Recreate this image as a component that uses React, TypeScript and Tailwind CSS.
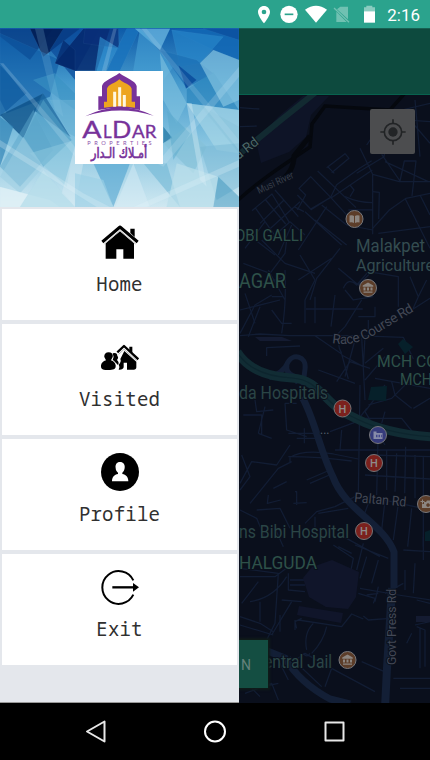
import React from "react";

const sans = "font-[Roboto,'Liberation_Sans',sans-serif]";

function StatusBar() {
  return (
    <header className={`h-7 shrink-0 bg-[#2ba38d] flex justify-end ${sans}`}>
      <svg viewBox="0 0 600 84" className="w-[200px] h-7 text-white" fill="#fff">
        <path fillRule="evenodd" d="M102 18c-10 0-18 8-18 18 0 13 18 34 18 34s18-21 18-34c0-10-8-18-18-18zm0 11a7 7 0 1 1 0 14 7 7 0 0 1 0-14z" />
        <circle cx="177" cy="43" r="26" />
        <path d="M164 43h26" stroke="#2ba38d" strokeWidth="5" />
        <path d="M225 29q33-24 66 0l-33 39z" />
        <path d="M331 20h23v38l-33-30zM319 35l31 31h-31z" opacity=".33" />
        <path d="M312 24l45 43" stroke="#72c0b2" strokeWidth="4" />
        <path d="M402 22h7v-5h18v5h8v13h-33z" opacity=".45" />
        <path d="M402 34h33v34h-33z" />
        <text x="472" y="63" fontSize="50" textLength="98" lengthAdjust="spacingAndGlyphs" fontFamily="Roboto, sans-serif">2:16</text>
      </svg>
    </header>
  );
}

const shards: [string, string, number][] = [
  ["0,86 160,86 90,180 0,110", "#0a3f86", 0.75],
  ["90,86 240,86 130,170", "#021d55", 0.9],
  ["0,100 180,180 150,290 20,340 0,300", "#0d5aa5", 0.6],
  ["150,150 190,86 300,86 230,212 225,240", "#0b4a9a", 0.7],
  ["165,190 250,86 330,86 290,212 225,212", "#04256a", 0.8],
  ["255,86 355,86 357,145 250,130", "#0a2f7a", 0.7],
  ["190,120 225,150 225,212 165,190", "#03276b", 0.7],
  ["300,110 357,145 310,212 285,212", "#2f8fd0", 0.65],
  ["380,86 420,86 360,212 320,212", "#1973bd", 0.8],
  ["405,86 510,86 480,150", "#72bfe6", 0.7],
  ["420,86 520,200 490,240 470,212 400,212", "#4aa5d8", 0.55],
  ["515,90 717,86 717,180 640,150", "#1268b5", 0.85],
  ["610,86 717,86 717,120", "#0b4f9f", 0.8],
  ["515,90 670,110 600,190 540,200", "#2685c9", 0.7],
  ["480,150 560,265 640,220 590,180", "#1b6fb4", 0.7],
  ["535,195 590,240 558,266", "#08499a", 0.8],
  ["560,268 640,215 717,330 560,310", "#2581bb", 0.6],
  ["640,150 717,180 717,300 670,320 600,190", "#8ac8e3", 0.65],
  ["480,160 560,310 530,370 490,300", "#82c4e1", 0.6],
  ["0,195 80,280 0,350", "#0e5a9f", 0.7],
  ["0,345 130,280 70,415", "#0a4e86", 0.75],
  ["130,280 212,412 100,330", "#145f98", 0.65],
  ["100,240 165,220 225,280 225,330", "#3a93c4", 0.6],
  ["150,300 225,300 225,410 205,400", "#69b1d4", 0.6],
  ["0,350 40,380 0,500", "#2c80b4", 0.65],
  ["70,415 130,300 215,420 130,500", "#4f9fc6", 0.6],
  ["0,500 100,330 160,450 60,560", "#5ba6cb", 0.5],
  ["90,460 225,420 200,560", "#8cc8df", 0.55],
  ["0,530 70,410 130,500 60,580", "#9acde2", 0.5],
  ["0,560 150,600 180,621 0,621", "#e2f2f7", 0.8],
  ["60,621 130,510 225,621", "#b7deeb", 0.75],
  ["185,580 225,440 250,490 225,621", "#d4eaf3", 0.5],
  ["280,490 390,490 340,621", "#3a98cb", 0.5],
  ["225,520 310,540 340,621 225,621", "#9bd0e6", 0.65],
  ["345,621 400,490 450,621", "#d8edf6", 0.5],
  ["430,490 500,490 540,621", "#71b8d6", 0.6],
  ["490,380 518,415 490,430", "#297da9", 0.8],
  ["490,430 560,380 620,440 580,520", "#86c2d9", 0.7],
  ["500,330 570,400 520,480", "#5aaacd", 0.5],
  ["560,310 717,330 717,460 650,450", "#a9d8e8", 0.65],
  ["600,315 717,380 717,460", "#8ac4dc", 0.5],
  ["600,440 717,430 717,560 650,600", "#76b7d4", 0.45],
  ["530,490 655,530 640,621 500,621", "#badfeb", 0.75],
  ["655,530 717,590 717,621 640,621", "#3f96be", 0.5],
  ["560,310 575,310 620,560 600,540", "#d8eef6", 0.4],
  ["105,86 130,86 190,350 165,330", "#8fc9e7", 0.2],
  ["340,86 350,86 250,490 230,490", "#d8effa", 0.2],
  ["425,86 440,86 717,420 717,450", "#d8effa", 0.15],
  ["0,190 10,190 225,440 225,470", "#d8effa", 0.2],
  ["717,200 717,230 490,500 470,490", "#d8effa", 0.2],
  ["717,480 717,500 440,621 400,621", "#e8f6fb", 0.25],
  ["0,440 0,420 250,580 330,621 290,621", "#e8f6fb", 0.25],
];

function BrandPanel() {
  return (
    <div className="h-[179px] relative shrink-0">
      <svg viewBox="0 84 717 537" preserveAspectRatio="none" className="w-full h-full block">
        <defs>
          <linearGradient id="sky" x1="0" y1="0" x2="0" y2="1">
            <stop offset="0" stopColor="#0d5aa8" />
            <stop offset=".3" stopColor="#4398cc" />
            <stop offset=".62" stopColor="#83c2df" />
            <stop offset="1" stopColor="#cfe8f1" />
          </linearGradient>
        </defs>
        <rect y="84" width="717" height="537" fill="url(#sky)" />
        {shards.map(([p, c, o], i) => (
          <polygon key={i} points={p} fill={c} opacity={o} stroke="#a5d5ee" strokeOpacity=".15" strokeWidth="1.5" />
        ))}
      </svg>
      <svg viewBox="0 0 264 279" className="absolute left-[75px] top-[43px] w-[88px] h-[93px] bg-white" role="img">
        <path d="M70 117V76h11V45C86 28 111 23 133 6c22 17 47 22 52 39v31h10v41q-62-12-125 0z" fill="#77329a" />
        <path d="M87 110V92h9V53c5-14 22-15 37-28 15 13 32 14 37 28v39h10v18q-46-9-93 0z" fill="#eda51f" />
        <path d="M119 107V62M134 106V49M148 107V72" stroke="#fff7df" strokeWidth="9" />
        <path d="M30 136q103-52 206-2-103-32-206 2z" fill="#77329a" />
        <g fill="#77329a" fontFamily="Lato, sans-serif">
          <g stroke="#77329a" strokeWidth="1">
            <text x="22" y="201" fontSize="71" textLength="58" lengthAdjust="spacingAndGlyphs">A</text>
            <text x="84" y="201" fontSize="50" textLength="26" lengthAdjust="spacingAndGlyphs">L</text>
            <text x="111" y="201" fontSize="71" textLength="58" lengthAdjust="spacingAndGlyphs">D</text>
            <text x="171" y="201" fontSize="50" textLength="73" lengthAdjust="spacingAndGlyphs">AR</text>
          </g>
          <text x="37" y="223" fontSize="17" textLength="193" opacity=".85">PROPERTIES</text>
          <text x="132" y="262" fontSize="43" textAnchor="middle" direction="rtl" textLength="168" lengthAdjust="spacingAndGlyphs" fontFamily="DejaVu Sans, sans-serif" stroke="#77329a" strokeWidth="2">أمـلاك الـدار</text>
        </g>
      </svg>
    </div>
  );
}

function HomeIcon() {
  return (
    <svg viewBox="0 0 114 102" className="w-[38px] h-[34px]">
      <path d="M88 11h13v25L88 24z" />
      <path d="M4 51L57 6l53 45" fill="none" stroke="#000" strokeWidth="9" strokeLinejoin="round" />
      <path d="M14 55l43-36 42 36v46H67V73H46v28H14z" />
      <path d="M10 57L57 17l47 40" fill="none" stroke="#bbb" strokeWidth="3" />
    </svg>
  );
}

function VisitedIcon() {
  return (
    <svg viewBox="0 0 114 78" className="w-[38px] h-[26px]">
      <path d="M85 8h9v20l-9-8zM53 62q9-9 5-17l12-24 36 32v17q0 7-8 7H78V56H68v14q-2 8-15 7 5-8 0-15z" />
      <path d="M49 25L69 6l43 40" fill="none" stroke="#000" strokeWidth="7" strokeLinejoin="round" />
      <path d="M53 31l16-15 38 34" fill="none" stroke="#aaa" strokeWidth="2.5" />
      <path d="M35 28q14-4 14 8 5 4-1 12 8 7 3 15l-9-9q-3-4-7-6 5-10 0-20z" />
      <path d="M23 25c10 0 14 7 12 14l-5 10q12 4 14 15c1 12-6 14-22 14S-1 76 0 64q2-11 15-15l-5-10c-1-7 3-14 13-14z" />
    </svg>
  );
}

function ProfileIcon() {
  return (
    <svg viewBox="0 0 114 114" className="w-[38px] h-[38px]">
      <circle cx="57" cy="57" r="57" />
      <path d="M57 27c-10 0-15 8-13 18 0 7 3 11 7 14v4c-11 2-18 9-18 22h49c0-13-7-20-18-22v-4c4-3 6-7 7-14 2-10-4-18-14-18z" fill="#fff" />
    </svg>
  );
}

function ExitIcon() {
  return (
    <svg viewBox="0 0 114 105" className="w-[38px] h-[35px]">
      <path d="M97 31A49 49 0 1 0 97 74" fill="none" stroke="#000" strokeWidth="6" />
      <path d="M34 52h66" stroke="#000" strokeWidth="7" />
      <path d="M96 39l18 13-18 13z" />
    </svg>
  );
}

const menu = [
  { label: "Home", icon: <HomeIcon /> },
  { label: "Visited", icon: <VisitedIcon /> },
  { label: "Profile", icon: <ProfileIcon /> },
  { label: "Exit", icon: <ExitIcon /> },
];

function Drawer() {
  return (
    <aside className="w-[239px] shrink-0 bg-[#e4e7ec] flex flex-col border-b border-[#999]">
      <BrandPanel />
      <nav className="flex flex-col gap-1 pt-0.5 px-0.5">
        {menu.map((m) => (
          <button key={m.label} className="h-[111px] bg-white flex flex-col items-center pt-3.5">
            <span className="h-[38px] flex items-center">{m.icon}</span>
            <span className="mt-[9px] leading-7 text-[19px] tracking-[0.2px] text-[#303030] font-['Noto_Sans_Mono','DejaVu_Sans_Mono',monospace]">
              {m.label}
            </span>
          </button>
        ))}
      </nav>
    </aside>
  );
}

const zoneNorth = [
  "M15 38l58 4M15 95l50-2M51 347l60-50 52 85M62 340l60 85M92 315l60 72M120 285l70 80M165 380l45 40M75 385l72-70M95 410l100-90M110 430l55-50",
  "M187 345l25-45-20-20 35-35 60 62 50 55M187 300l40 42 60-35 18-38 70-50 35-22M248 228l115 110M278 215l20 20M275 218l55-42 12 14-52 43M287 310l125-85M227 345l60-38M207 350l-30-15",
  "M375 160l38 78v180M365 235l82-50 15-90M413 238l80 22h92M440 178l55 80 13-60h35l-12 105M450 200l130 60M345 270l12 15-12 20M330 305q40 18 82 18M340 345l72-1M395 150l55-80 135 10M450 95l75-20 60 70M540 15l15 170M500 45l85-20",
  "M413 290l20 2-2 80M413 400l50-55 50-35 72-15M510 310l75 150M555 300l30 60M430 415l155-20M260 330l75 60 78 15M240 375l95 75M210 350l110 100M190 465l85-130M15 400l105 80M30 460l60-80M130 480l40-90",
];

const zoneMiddle = [
  "M25 70l80 30 45-60 5-40M80 0l70 70 90 30M150 90q5 100-10 190M100 90l50 90M30 160l30 90M15 210l120-30M60 140l90-30M210 180v70M240 170v80M213 207h170M195 45l45 75-30 60",
  "M190 120l100-65M315 25l-70 90-20 65M325 145q15-35 40-10l35-40 90 15v90M330 150l25 30 60-10M310 85l60 50 70-70M380 180l-50 80-30 30M300 165l-12 95M370 230h50v-30M400 240v45M470 90l115-25M525 110l25 60-20 45M575 120l-25 50M530 210l55-35",
  "M15 287l60-5 90 5h200l140 5 30 65M95 348v-25l100-5M240 287l80 55 20 75M320 340q-18-30 0-50M320 345l65 35 5-90M360 300l-30 110M250 390l110 40M305 425l40-60 60 20M380 290l10 190M390 370l55-45M420 415l165 30M450 350l-60 70",
  "M15 280l45-85 50-30M40 290l35-90M110 210l30 40h30M110 170h35",
];

const zoneSouth = [
  "M25 105h55v60M90 80l-20 80M60 60l5 35 50-5M70 160l40 15M150 70l5 80 60 20M160 160h85M185 175h60M208 145v45M150 70h35",
  "M15 310l35-65 75 10 40-60M20 225l25 65-30 40M45 370l85-105 40-20M100 345l-3 25 40-10M115 325l40-20M160 230q90 0 190 13M165 232q40-25 130-10l75 15M165 230v20M215 300l70-30M225 310l65-28M180 335h5v40M175 370l40-2",
  "M15 390l50 25 25 60M65 390l70-5 30 60M120 445l25 55M210 430l35-35 55-15 60-30M240 410v40M250 400l90-15M285 155l80-30 30-40M320 150l-5 60M375 15l-5 325M450 15l-60 80 60 100",
  "M300 210h285M405 225l180 5M390 285l195 12M430 135l-5 210M455 210v120M485 220l-5 115M512 200l-3 140M540 225v130M565 230v120M400 350l185 40M410 345l-25 65M450 360l-10 90M490 370l-15 110M530 385l-12 115M565 395v105",
  "M400 75l70-20 55-55M440 130l10-35M535 85l50-30M530 85l-50-40-10-40M380 115h120l40 50",
];

const zoneBottom = [
  "M15 140h105l60-45M15 115l115 15-10 150-25 50M20 220l50-65M45 215q70-10 110-75M160 130v50l50 5M165 150h45M165 165h45M140 210l60 5M15 260l60 20 40 25M75 215v60M135 255v50M185 295l-5-20 20-10M190 270l130 20 30-38 35 15M385 258l15 12 65-5M180 270v30",
  "M235 280q-30 30-20 80M275 290q-10 45-45 80M205 370q10 15 20 0M160 405l50-35 70 40 140 75M165 380l95 90M270 470l20-55M295 45l60 40-10 50M310 50l40 20M325 20l110 60M360 45l100 40M395 80l-20 65M430 90l-20 70M385 40l-20 80",
  "M375 175l115 20 95 15M370 190l50 15-5 15M395 195l35-5M420 215l10-45M450 190l55-30M510 120v60M540 100l-5 90M565 20v70M505 60l80 5M545 210l40 10M540 285l45-10M545 290l25 10v110M555 295v120M530 310l-15 30M475 445h110M495 475h90M380 395l80 35",
  "M15 440l60 60M30 490l80-30 20 50M15 285l100 30M60 475l70-15M110 315l60-100M120 370l40 80",
];

function H({ x, y }: { x: number; y: number }) {
  return (
    <g>
      <circle cx={x} cy={y} r="8.5" fill="#7b211d" stroke="#777476" strokeWidth="1" />
      <text x={x} y={y + 4} fontSize="11" fontWeight="500" textAnchor="middle" fill="#8e8b8b">H</text>
    </g>
  );
}

function Pin({ x, y, kind }: { x: number; y: number; kind: "book" | "bank" | "camera" | "store" }) {
  return (
    <g transform={`translate(${x} ${y})`}>
      <circle r="8.5" fill={kind === "store" ? "#363b7c" : "#5c3d29"} stroke="#77777b" />
      {kind === "book" && <path d="M-5-3.500q3-.8 4.500.4v7q-2-1.200-4.500-.5zM5-3.500q-3-.8-4.500.4v7q2-1.200 4.500-.5z" fill="#8c8580" />}
      {kind === "bank" && <path d="M-5.300-2.500L0-5.500l5.300 3v1.200h-10.600zM-4.500-.5h2v3h-2zM-1-.5h2v3h-2zM2.500-.5h2v3h-2zM-4.500 3.400h9v1.400h-9z" fill="#8c8580" />}
      {kind === "camera" && <path fillRule="evenodd" d="M-2-2h2l1-1.500h3L5-2h3v6H-4V0h2zM2-.8a1.800 1.800 0 1 0 .1 0zM-4-4.500h1V-3h1.500v1H-3v1.500h-1V-2h-1.500v-1H-4z" fill="#8c8580" />}
      {kind === "store" && (
        <g>
          <path d="M-4.500-3.500h3v1.500h6v6h-9z" fill="#878ba9" />
          <path d="M-2-.2h1.500v2.500H-2zM.5-.2H2v2.500H.5zM3-.2h.8v2.500H3z" fill="#40458a" />
        </g>
      )}
    </g>
  );
}

function Roads({ y, paths }: { y: number; paths: string[] }) {
  return (
    <g transform={`translate(235 ${y}) scale(.33333)`} fill="none" stroke="#121d34" strokeWidth="3.800" strokeLinejoin="round">
      {paths.map((d) => (
        <path key={d} d={d} />
      ))}
    </g>
  );
}

function CityMap() {
  return (
    <svg viewBox="239 95 191 608" className="w-[191px] h-[608px] block bg-[#0a0f1c]" fontFamily="Roboto, sans-serif">
      <path d="M261 163l28-11 17-15 5-22 18-19h-26l-25 21-22 24z" fill="#0e1427" />
      <Roads y={95} paths={zoneNorth} />
      <Roads y={240} paths={zoneMiddle} />
      <Roads y={380} paths={zoneSouth} />
      <Roads y={530} paths={zoneBottom} />
      <path d="M303 578l9-11 20-7 27 12-3 25-8 12-22-2-17-10zM299 606l44 7-2 10-44-8z" fill="#10152a" />
      <path d="M255 337h27l10 4h-32zM416 616h14v6h-14z" fill="#141b31" />
      <path d="M398 344l5-5 10 8-8 7zM371 387l16-1-1 15-18-1zM425 532l5-2v11h-5z" fill="#06202a" />
      <g fill="none" stroke="#131f36">
        <path d="M269 378q15-6 18-14c5-12 20-8 18 5l-2 16M287 365q-2 8 7 11l4 7" strokeWidth="5" />
        <path d="M302 397c12 20 18 54 31 80 12 33 51 47 61 75v36" strokeWidth="7" />
        <path d="M392 588l-5 80-2 40" strokeWidth="8" />
        <path d="M260 648l25 10q15 25 45 41l20 5" strokeWidth="7" />
      </g>
      <g fill="none">
        <path d="M237 156l44-36 35-28" stroke="#122a31" strokeWidth="6" />
        <path d="M237 352q15 24 55 26c30 2 30 27 65 41q30 15 77 18" stroke="#112c34" strokeWidth="9" />
        <path d="M237 352q15 24 55 26c30 2 30 27 65 41q30 15 77 18" stroke="#0d252e" strokeWidth="1.200" />
        <path d="M237 201q20-18 45-35l28-19 2-23 13-18 65 4 15-17" stroke="#05080e" strokeWidth="3.500" />
        <path d="M279 182q15-10 15-26l16-20" stroke="#05080e" strokeWidth="5" />
      </g>
      <g stroke="#0a101c" strokeWidth="2" paintOrder="stroke" fill="#2e5149">
        <text x="238.500" y="160" fontSize="13.500" fill="#4d6866" transform="rotate(-38 238.500 160)">a Rd</text>
        <text x="259" y="194" fontSize="10" fill="#373d49" textLength="39" lengthAdjust="spacingAndGlyphs" transform="rotate(-25 259 194)">Musi River</text>
        <text x="235" y="241" fontSize="16.500" textLength="68" lengthAdjust="spacingAndGlyphs">OBI GALLI</text>
        <text x="356" y="251.500" fontSize="18" fill="#344c50" textLength="69" lengthAdjust="spacingAndGlyphs">Malakpet</text>
        <text x="356" y="271" fontSize="17" fill="#344c50" textLength="78" lengthAdjust="spacingAndGlyphs">Agriculture</text>
        <text x="239" y="288" fontSize="19.500" textLength="47" lengthAdjust="spacingAndGlyphs">AGAR</text>
        <text x="377" y="367" fontSize="16" textLength="60" lengthAdjust="spacingAndGlyphs">MCH CO</text>
        <text x="400" y="384.500" fontSize="16" textLength="32" lengthAdjust="spacingAndGlyphs">MCH</text>
        <text x="239" y="398.500" fontSize="18" fill="#2a4546" textLength="89" lengthAdjust="spacingAndGlyphs">da Hospitals</text>
        <text x="239" y="538" fontSize="18" fill="#2a4546" textLength="110" lengthAdjust="spacingAndGlyphs">ns Bibi Hospital</text>
        <text x="239" y="569" fontSize="18" textLength="78" lengthAdjust="spacingAndGlyphs">HALGUDA</text>
        <text x="264" y="667.500" fontSize="17.500" fill="#2a4546" textLength="68" lengthAdjust="spacingAndGlyphs">entral Jail</text>
        <text x="354" y="502" fontSize="13.500" fill="#434856" textLength="52" lengthAdjust="spacingAndGlyphs" transform="rotate(5 354 502)">Paltan Rd</text>
        <text x="396" y="665" fontSize="13.500" fill="#434856" textLength="76" lengthAdjust="spacingAndGlyphs" transform="rotate(-90 396 665)">Govt Press Rd</text>
        <path id="race" d="M332 343Q355 347 376 334T416 310" fill="none" stroke="none" />
        <text fontSize="13.500" fill="#434856">
          <textPath href="#race" textLength="90">Race Course Rd</textPath>
        </text>
        <text x="320" y="434" fontSize="12" fill="#55606e">...</text>
      </g>
      <Pin x={354.500} y={219} kind="book" />
      <Pin x={368} y={288} kind="bank" />
      <Pin x={378} y={435} kind="store" />
      <Pin x={426} y={504} kind="camera" />
      <Pin x={347.500} y={660} kind="bank" />
      <H x={342.500} y={408.500} />
      <H x={374} y={463} />
      <H x={364} y={531} />
    </svg>
  );
}

function MapScreen() {
  return (
    <main className="flex-1 min-w-0 overflow-hidden">
      <div className="h-[67px] bg-[#0d4a3e] border-b border-[#08624e] border-t border-t-[#176052]" />
      <div className="relative">
        <CityMap />
        <button className="absolute left-[131px] top-[14px] w-[45px] h-[45px] bg-[#4c4d4f] rounded-[2px] flex items-center justify-center">
          <svg viewBox="0 0 78 78" className="w-[26px] h-[26px]" fill="none" stroke="#222426" strokeWidth="5">
            <circle cx="39" cy="39" r="26" />
            <circle cx="39" cy="39" r="14" fill="#222426" stroke="none" />
            <path d="M39 1v12M39 65v12M1 39h12M65 39h12" />
          </svg>
        </button>
        <button className={`absolute left-0 top-[545px] w-[29px] h-12 bg-[#144e42] shadow-[0_0_2px_2px_#101b19] text-[#64827c] text-sm text-left pl-0.5 pt-0.5 ${sans}`}>
          N
        </button>
      </div>
    </main>
  );
}

function NavigationBar() {
  return (
    <footer className="h-[57px] shrink-0 bg-black">
      <svg viewBox="0 0 430 57" className="w-[430px] h-[57px]" fill="none" stroke="#e8e8e8" strokeWidth="2" strokeLinejoin="round">
        <path d="M87 28.500L104.500 18.500v20z" />
        <circle cx="215" cy="28.500" r="10" stroke="#fff" />
        <rect x="325.500" y="19.500" width="18" height="18" />
      </svg>
    </footer>
  );
}

export default function App() {
  return (
    <div className="w-[430px] h-[760px] overflow-hidden bg-black flex flex-col">
      <StatusBar />
      <div className="h-[675px] flex shrink-0">
        <Drawer />
        <MapScreen />
      </div>
      <NavigationBar />
    </div>
  );
}
